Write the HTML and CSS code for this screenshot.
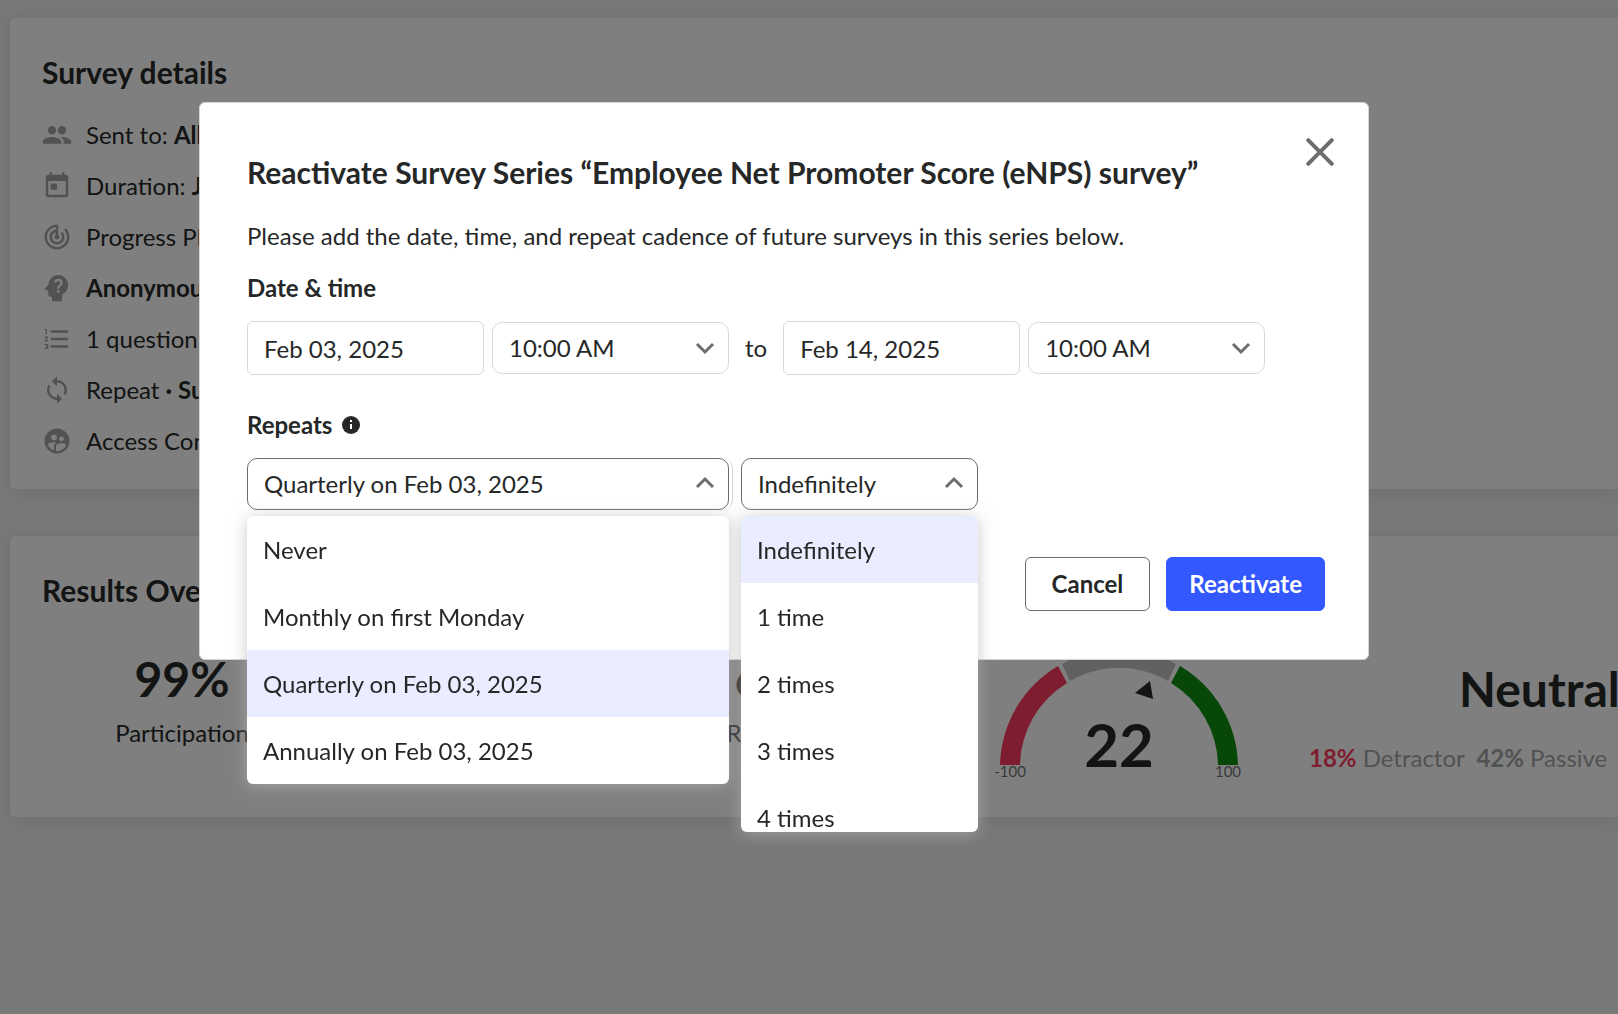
FILE: index.html
```html
<!DOCTYPE html>
<html lang="en">
<head>
    <meta charset="utf-8">
    <title>Survey details</title>
    <link rel="stylesheet" href="styles.css">
</head>
<body>
    <main class="page">
        <section class="card details">
            <h2>Survey details</h2>
            <ul class="detail-list">
                <li>
                    <svg class="icon" viewBox="0 0 24 24"><path d="M8 11.500c1.900 0 3.300-1.500 3.300-3.400S9.900 4.800 8 4.800 4.700 6.300 4.700 8.100 6.100 11.500 8 11.500zM16 11.500c1.900 0 3.300-1.500 3.300-3.400S17.900 4.800 16 4.800s-3.300 1.500-3.300 3.300S14.100 11.500 16 11.500zM8 13.500c-2.600 0-7.400 1.200-7.400 3.800V19H15.500v-1.700c0-2.600-4.900-3.800-7.500-3.800zM16 13.500c-.3 0-.6 0-1 .1 1.500 1 2.400 2.200 2.400 3.700V19h6v-1.700c0-2.600-4.900-3.800-7.400-3.800z"/></svg>
                    <span>Sent to: <b>All</b></span>
                </li>
                <li>
                    <svg class="icon" viewBox="0 0 24 24"><path d="M19 3h-1V1h-2v2H8V1H6v2H5c-1.11 0-2 .9-2 2v14c0 1.1.89 2 2 2h14c1.1 0 2-.9 2-2V5c0-1.1-.9-2-2-2zm0 16H5V8h14v11zM7 10h5v5H7z"/></svg>
                    <span>Duration: <b>Jan</b></span>
                </li>
                <li>
                    <svg class="icon" viewBox="0 0 24 24"><path d="M19.07 4.93l-1.41 1.41C19.1 7.79 20 9.79 20 12c0 4.42-3.58 8-8 8s-8-3.58-8-8c0-4.08 3.05-7.44 7-7.93v2.02C8.16 6.57 6 9.03 6 12c0 3.31 2.69 6 6 6s6-2.69 6-6c0-1.66-.67-3.16-1.76-4.24l-1.41 1.41C15.55 9.9 16 10.9 16 12c0 2.21-1.79 4-4 4s-4-1.79-4-4c0-1.86 1.28-3.41 3-3.86v2.14c-.6.35-1 .98-1 1.72 0 1.1.9 2 2 2s2-.9 2-2c0-.74-.4-1.38-1-1.72V2h-1C6.48 2 2 6.48 2 12s4.48 10 10 10 10-4.48 10-10c0-2.76-1.12-5.26-2.93-7.07z"/></svg>
                    <span>Progress Plan</span>
                </li>
                <li>
                    <svg class="icon" viewBox="0 0 24 24"><path fill-rule="evenodd" d="M13 1.500C8.900 1.500 5.500 4.700 5.200 8.900L2.300 12.800c-.3.400 0 1 .5 1H5V17c0 1.100.9 2 2 2h1v3.500h8v-5.200c2.900-1.300 4.900-4.200 4.900-7.600C20.900 5.200 17.400 1.500 13 1.500zM12 15.800v-2h2v2zM14.300 11.200c-.3.300-.4.700-.4 1.300h-1.800c0-1.300.3-1.900 1-2.500.9-.8 1.600-1.300 1.600-2.200 0-.9-.7-1.500-1.600-1.500-.9 0-1.600.6-1.800 1.500l-1.700-.7C10 5.600 11.400 4.600 13.100 4.600c2 0 3.500 1.300 3.500 3.200 0 1.600-1 2.300-2.300 3.400z"/></svg>
                    <b>Anonymous</b>
                </li>
                <li>
                    <svg class="icon" viewBox="0 0 24 24"><path d="M2 17h2v.5H3v1h1v.5H2v1h3v-4H2v1zm1-9h1V4H2v1h1v3zm-1 3h1.800L2 13.100v.9h3v-1H3.200L5 10.900V10H2v1zm5-6v2h14V5H7zm0 14h14v-2H7v2zm0-6h14v-2H7v2z"/></svg>
                    <span>1 question</span>
                </li>
                <li>
                    <svg class="icon" viewBox="0 0 24 24"><path d="M12 4V1L8 5l4 4V6c3.310 0 6 2.690 6 6 0 1.010-.25 1.970-.7 2.800l1.460 1.460C19.540 15.030 20 13.570 20 12c0-4.420-3.580-8-8-8zm0 14c-3.310 0-6-2.690-6-6 0-1.010.25-1.970.7-2.800L5.240 7.740C4.460 8.970 4 10.430 4 12c0 4.420 3.580 8 8 8v3l4-4-4-4v3z"/></svg>
                    <span>Repeat <b>· Survey</b></span>
                </li>
                <li>
                    <svg class="icon" viewBox="0 0 24 24"><path d="M12 2C6.480 2 2 6.480 2 12s4.480 10 10 10 10-4.480 10-10S17.520 2 12 2zm3.610 6.340c1.070 0 1.930.86 1.930 1.930 0 1.070-.86 1.930-1.930 1.930-1.070 0-1.930-.86-1.930-1.930-.01-1.070.86-1.930 1.930-1.930zm-6-1.580c1.300 0 2.360 1.060 2.360 2.360 0 1.300-1.060 2.360-2.360 2.360s-2.360-1.060-2.360-2.360c0-1.310 1.050-2.360 2.360-2.360zm0 9.130v3.750c-2.400-.75-4.300-2.600-5.140-4.960 1.050-1.120 3.670-1.690 5.140-1.690.53 0 1.200.08 1.900.22-1.640.87-1.900 2.020-1.900 2.680zM12 20c-.27 0-.53-.01-.79-.04v-4.070c0-1.420 2.940-2.130 4.400-2.130 1.070 0 2.920.39 3.840 1.150C18.280 17.880 15.390 20 12 20z"/></svg>
                    <span>Access Control</span>
                </li>
            </ul>
        </section>

        <section class="card results">
            <h2>Results Overview</h2>
            <div class="stats">
                <div class="stat">
                    <strong>99%</strong>
                    <span>Participation</span>
                </div>
                <div class="stat responses">
                    <strong>64%</strong>
                    <span>Responses</span>
                </div>
                <svg class="gauge" viewBox="0 0 248 150">
                    <path class="gauge-low" d="M5 132A118 118 0 0 1 63 33L72 50A98 98 0 0 0 25 132z"/>
                    <path class="gauge-mid" d="M67 31A118 118 0 0 1 181 31L173 48A98 98 0 0 0 75 48z"/>
                    <path class="gauge-high" d="M185 33A118 118 0 0 1 243 132L223 132A98 98 0 0 0 176 50z"/>
                    <path class="gauge-pointer" d="M155 48L140 60L158 66z"/>
                    <text class="gauge-score" x="124" y="134">22</text>
                    <text class="gauge-label" x="15" y="144">-100</text>
                    <text class="gauge-label" x="233" y="144">100</text>
                </svg>
                <div class="summary">
                    <strong>Neutral</strong>
                    <p><b class="low">18%</b> Detractor <b class="second">42%</b> Passive</p>
                </div>
            </div>
        </section>
    </main>

    <div class="overlay">
        <form class="modal" role="dialog" aria-labelledby="modalTitle">
            <button type="button" class="close" aria-label="Close">
                <svg viewBox="0 0 28 28"><path d="M1 1L27 27M27 1L1 27"/></svg>
            </button>
            <h1 id="modalTitle">Reactivate Survey Series “Employee Net Promoter Score (eNPS) survey”</h1>
            <p>Please add the date, time, and repeat cadence of future surveys in this series below.</p>

            <label class="group-label" for="startDate">Date &amp; time</label>
            <div class="row date-row">
                <input type="text" id="startDate" class="field" value="Feb 03, 2025">
                <div class="select">
                    <select aria-label="Start time"><option>10:00 AM</option></select>
                    <svg class="chevron" viewBox="0 0 18 12"><path d="M1 2L9 10L17 2"/></svg>
                </div>
                <label class="to" for="endDate">to</label>
                <input type="text" id="endDate" class="field" value="Feb 14, 2025">
                <div class="select">
                    <select aria-label="End time"><option>10:00 AM</option></select>
                    <svg class="chevron" viewBox="0 0 18 12"><path d="M1 2L9 10L17 2"/></svg>
                </div>
            </div>

            <label class="group-label" for="repeats">Repeats
                <svg class="info" viewBox="0 0 18 18"><circle cx="9" cy="9" r="9"/><path d="M8 4h2v2H8zM8 8h2v5H8z"/></svg>
            </label>
            <div class="row repeat-row">
                <div class="repeat-wrap">
                    <div class="select open cadence">
                        <select id="repeats"><option>Quarterly on Feb 03, 2025</option></select>
                        <svg class="chevron" viewBox="0 0 18 12"><path d="M1 9L9 1L17 9"/></svg>
                        <ul class="menu" role="listbox" aria-label="Repeats">
                            <li role="option">Never</li>
                            <li role="option">Monthly on first Monday</li>
                            <li role="option" class="selected" aria-selected="true">Quarterly on Feb 03, 2025</li>
                            <li role="option">Annually on Feb 03, 2025</li>
                        </ul>
                    </div>
                </div>
                <div class="select open">
                    <select aria-label="Number of repeats"><option>Indefinitely</option></select>
                    <svg class="chevron" viewBox="0 0 18 12"><path d="M1 9L9 1L17 9"/></svg>
                    <ul class="menu times" role="listbox" aria-label="Number of repeats">
                        <li role="option" class="selected" aria-selected="true">Indefinitely</li>
                        <li role="option">1 time</li>
                        <li role="option">2 times</li>
                        <li role="option">3 times</li>
                        <li role="option">4 times</li>
                    </ul>
                </div>
            </div>

            <div class="actions">
                <button type="button" class="btn">Cancel</button>
                <button type="submit" class="btn primary">Reactivate</button>
            </div>
        </form>
    </div>
</body>
</html>
```

FILE: styles.css
```css
* {
    box-sizing: border-box;
}

body {
    margin: 0;
    min-height: 100vh;
    overflow: hidden;
    background-color: #eff2f0;
    color: #262828;
    font-family: Lato, "Open Sans", sans-serif;
    font-size: 24px;
    line-height: 30px;
}

h1, h2, p, ul {
    margin: 0;
    padding: 0;
}

ul {
    list-style: none;
}

h1, h2 {
    font-size: 30px;
    line-height: 36px;
    font-weight: bold;
}

input, select, button {
    font: inherit;
    color: inherit;
}

/* Page behind the dialog */
.page {
    display: flex;
    flex-direction: column;
    gap: 47px;
    padding: 18px 0 0 10px;
}

.card {
    padding: 36px 0 0 32px;
    background-color: #fff;
    border-radius: 6px 0 0 6px;
    box-shadow: 0 2px 16px rgba(90, 100, 130, 0.15);
    white-space: nowrap;
}

.details {
    padding-bottom: 33px;
}

.detail-list {
    display: flex;
    flex-direction: column;
    gap: 21px;
    margin-top: 30px;
}

.detail-list li {
    display: flex;
    align-items: center;
    gap: 14px;
}

.icon {
    width: 30px;
    height: 30px;
    fill: #a3a5a5;
}

.results {
    padding-bottom: 34px;
}

.stats {
    display: flex;
    margin-top: 24px;
}

.stat {
    display: flex;
    flex-direction: column;
    flex-shrink: 0;
    align-items: center;
    gap: 10px;
    width: 280px;
    margin-top: 18px;
}

.stat strong, .summary strong {
    font-size: 48px;
    line-height: 58px;
}

.responses {
    margin-left: 320px;
    margin-right: 73px;
}

.gauge {
    flex-shrink: 0;
    width: 248px;
    height: 150px;
    margin-top: 1px;
}

.gauge-low {
    fill: #ff3b60;
}

.gauge-mid {
    fill: #c2c2c2;
}

.gauge-high {
    fill: #0f9010;
}

.gauge-pointer, .gauge-score {
    fill: #262828;
}

.gauge-score {
    font-size: 60px;
    font-weight: bold;
    text-anchor: middle;
}

.gauge-label {
    fill: #737575;
    font-size: 15px;
    text-anchor: middle;
}

.summary {
    display: flex;
    flex-direction: column;
    gap: 25px;
    margin: 28px 0 0 66px;
    color: #a3a5a5;
}

.summary strong {
    color: #262828;
    margin-left: 150px;
}

.low {
    color: #ff3b60;
}

.second {
    margin-left: 6px;
}

/* Dialog */
.overlay {
    position: fixed;
    inset: 0;
    padding: 102px 16px 0 199px;
    background-color: rgba(0, 0, 0, 0.5);
}

.modal {
    position: relative;
    max-width: 1170px;
    padding: 51px 43px 48px 47px;
    background-color: #fff;
    border: 1px solid #d3d5d5;
    border-radius: 6px;
}

.modal p {
    margin-top: 31px;
}

.close {
    position: absolute;
    top: 35px;
    right: 34px;
    width: 28px;
    height: 28px;
    padding: 0;
    border: none;
    background: none;
    cursor: pointer;
}

.close svg {
    display: block;
    fill: none;
    stroke: #6b6d6e;
    stroke-width: 4;
}

.group-label {
    display: flex;
    align-items: center;
    gap: 10px;
    margin-top: 22px;
    font-weight: bold;
}

.info {
    width: 18px;
    height: 18px;
    fill: #262828;
}

.info path {
    fill: #fff;
}

.row {
    display: flex;
    align-items: center;
}

.date-row {
    gap: 8px;
    margin: 18px 0 35px;
}

.field {
    width: 237px;
    height: 54px;
    padding: 0 16px;
    border: 1px solid #d7d8d8;
    border-radius: 6px;
    background-color: #fff;
}

.to {
    padding: 0 8px;
}

.select {
    position: relative;
    width: 237px;
}

.select select {
    display: block;
    width: 100%;
    height: 52px;
    padding: 0 48px 0 16px;
    border: 1px solid #d7d8d8;
    border-radius: 10px;
    background-color: #fff;
    appearance: none;
}

.select.open select {
    border-color: #6b6d6e;
}

.chevron {
    position: absolute;
    top: 20px;
    right: 15px;
    width: 18px;
    height: 12px;
    overflow: visible;
    fill: none;
    stroke: #6b6d6e;
    stroke-width: 3;
    pointer-events: none;
}

.repeat-row {
    gap: 8px;
    margin-top: 18px;
}

.repeat-wrap {
    padding-right: 3px;
    border-right: 1px solid #d7d8d8;
    border-radius: 10px;
}

.select.cadence {
    width: 482px;
}

.menu {
    position: absolute;
    top: 58px;
    left: 0;
    z-index: 1;
    width: 100%;
    overflow: hidden;
    background-color: #fff;
    border-radius: 6px;
    box-shadow: 0 2px 16px rgba(180, 180, 180, 0.7);
}

.menu li {
    height: 67px;
    padding: 0 16px;
    line-height: 68px;
}

.times {
    height: 316px;
}

.menu .selected {
    background-color: #e9edff;
}

.actions {
    display: flex;
    justify-content: flex-end;
    gap: 16px;
    margin-top: 47px;
}

.btn {
    height: 54px;
    padding: 0 26px;
    border: 1px solid #6b6d6e;
    border-radius: 6px;
    background-color: #fff;
    font-weight: bold;
    cursor: pointer;
}

.primary {
    padding: 0 22px;
    border-color: #3358ff;
    background-color: #3358ff;
    color: #fff;
}
```
